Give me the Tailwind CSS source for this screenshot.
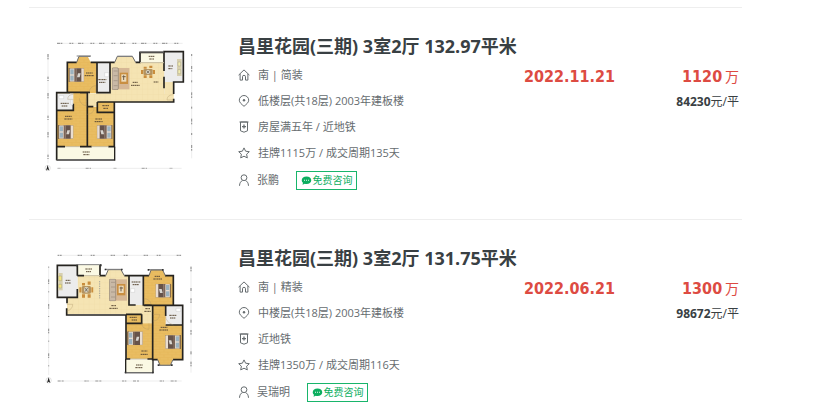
<!DOCTYPE html>
<html lang="zh-CN">
<head>
  <meta charset="UTF-8" />
  <meta name="viewport" content="width=device-width, initial-scale=1" />
  <title>昌里花园(三期) 成交</title>
  <script src="https://cdn.jsdelivr.net/npm/@tailwindcss/browser@4"></script>
</head>
<body class="bg-white text-[#666c6f] font-['Open_Sans','Noto_Sans_CJK_SC',sans-serif]">
  <!-- Shared symbols -->
  <svg class="absolute size-0" aria-hidden="true">
    <defs>
      <symbol id="i-home" viewBox="0 0 12 12"><path d="M.6 6.1 6 .9l5.4 5.2M2.1 5v6.1h2.4V7.8a1.5 1.5 0 0 1 3 0v3.3h2.4V5" fill="none" stroke="currentColor" /></symbol>
      <symbol id="i-pin" viewBox="0 0 12 12"><path d="M6 11.3C3.6 9.3 1.3 7.500 1.300 5.200a4.700 4.700 0 0 1 9.400 0C10.700 7.500 8.400 9.300 6 11.300Z" fill="none" stroke="currentColor" /><circle cx="6" cy="5.200" r="1.200" fill="currentColor" /></symbol>
      <symbol id="i-tag" viewBox="0 0 12 12"><path d="M2.500 1h7v8.800L6 11.200 2.500 9.800Z" fill="none" stroke="currentColor" /><path d="M6 3.600v4M4 5.600h4" stroke="currentColor" stroke-width="1.300" /><path d="M1.500 1h9" stroke="currentColor" /></symbol>
      <symbol id="i-star" viewBox="0 0 12 12"><path d="m6 .9 1.600 3.300 3.700.5-2.700 2.500.7 3.700L6 9.200l-3.300 1.700.7-3.700L.7 4.700l3.700-.5Z" fill="none" stroke="currentColor" stroke-linejoin="round" /></symbol>
      <symbol id="i-user" viewBox="0 0 12 12"><circle cx="6" cy="3.700" r="2.900" fill="none" stroke="currentColor" /><path d="M1.500 11.800c.1-3 1.500-4.700 3-5.200M10.500 11.800c-.1-3-1.500-4.700-3-5.200" fill="none" stroke="currentColor" /></symbol>
      <symbol id="i-chat" viewBox="0 0 12 10"><path d="M6 .5c3.100 0 5.300 1.700 5.300 4.100S9.100 8.800 6 8.800c-.7 0-1.300-.1-1.900-.3L1.600 9.700l.5-2.200C1.200 6.800.7 5.800.7 4.600.7 2.200 2.900.5 6 .5Z" fill="currentColor" /><path d="M3.300 4.300h1v.9h-1zM5.500 4.300h1v.9h-1zM7.700 4.300h1v.9h-1z" fill="#fff" /></symbol>

      <pattern id="wood" width="24" height="16" patternUnits="userSpaceOnUse"><rect width="24" height="16" fill="#e9bd62" /><path d="M0 1h24M0 9h24M6 1v8M18 9v7" stroke="#dfae50" /></pattern>
      <pattern id="tile" width="16" height="16" patternUnits="userSpaceOnUse"><rect width="16" height="16" fill="#f5e4b3" /><path d="M0 0h16M0 0v16" stroke="#ecd6a0" /></pattern>
      <!-- bed with its head on the left -->
      <symbol id="bed" viewBox="0 0 48 42"><rect y="0" width="6" height="42" fill="#8a6d48" /><rect x="4" y="1" width="43" height="40" fill="#e9ddd0" stroke="#8b7a69" /><rect x="6" y="4" width="10" height="15" fill="#9cb2bf" /><rect x="6" y="23" width="10" height="15" fill="#9cb2bf" /><rect x="18" y="1" width="6" height="40" fill="#7b6558" /><rect x="24" y="1" width="15" height="40" fill="#66534a" /><path d="M29 16h8l-3 12h-8z" fill="#d8d5cf" /></symbol>
      <!-- sofa, rug and coffee table -->
      <symbol id="sofa" viewBox="0 0 54 68"><rect x="18" y="2" width="36" height="64" fill="#d6b795" /><rect x="24" y="16" width="25" height="34" fill="#c98f42" /><rect x="29" y="21" width="15" height="22" fill="#eddcbc" /><path d="M32 28h10M36 24v14" stroke="#6f5c48" stroke-width="3" /><rect x="1" y="1" width="19" height="66" rx="4" fill="#c9b9a6" stroke="#8b7d6e" stroke-width="2" /><path d="M6 11h12M6 25h12M6 40h12M6 55h12" stroke="#9c8d7d" stroke-width="2" /></symbol>
      <symbol id="dining" viewBox="0 0 44 42"><rect x="8" y="12" width="28" height="18" rx="4" fill="#b4935e" /><circle cx="22" cy="21" r="7" fill="#d5ceb9" /><path d="M9 5h9v6H9zM26 2h9v7h-9zM9 31h9v8H9zM26 31h9v8h-9z" fill="#c98d3d" /><path d="M1 15h6v12H1zM37 15h6v12h-6z" fill="#c98d3d" /><path d="M18 17l8 8M26 17l-8 8" stroke="#625b50" stroke-width="2" /></symbol>
    </defs>
  </svg>

  <main class="ml-[29px] mt-[7px] max-w-[713px]">
    <ul>
      <!-- Listing 1 -->
      <li class="flex items-start border-t border-[#eeeeee] pt-[22px] pb-[25px]">
        <a href="#" class="ml-px w-[180px] shrink-0" aria-label="户型图">
          <svg viewBox="0 0 540 450" class="w-full">
            <!-- dimension lines -->
            <g fill="none" stroke="#777" stroke-width="3">
              <path d="M81 40H458" stroke-dasharray="9 2 5 21 6 2 4 14" />
              <path d="M83 415H455" stroke-dasharray="3 2 3 76 9 3 4 68" opacity=".8" />
              <path d="M54 72V400" stroke-dasharray="9 2 5 52 7 3 3 36" />
              <path d="M485 72V385" stroke-dasharray="6 30 9 3 5 26" />
              <path d="M81 40H458M83 415H455M54 72V400M485 72V385" stroke="#c9c9c9" stroke-width="1" />
            </g>
            <circle cx="53" cy="414" r="8" fill="#fff" stroke="#aaa" /><path d="m53 405 5 17-5-4-5 4z" fill="#222" />
            <!-- floors -->
            <path d="M112 97h28l6-16h28l8 16h18v92h-88z" fill="url(#wood)" />
            <path d="M80 188h91v162H80zM170 230h82v120h-82zM202 216h50v32h-50z" fill="url(#wood)" />
            <path d="M240 97h14l8-16h47l8 16h113v119H170v-26h70z" fill="url(#tile)" />
            <path d="M170 214h32v16h-32z" fill="url(#tile)" />
            <path d="M201 97h38v91h-38zM81 190h49v50H81zM402 67h58v89h-29v36h-28z" fill="#ececec" />
            <path d="M403 156h28v59h-28z" fill="url(#tile)" />
            <path d="M330 68h72v29h-72zM80 352h172v36H80z" fill="#fbf9e4" />
            <!-- walls -->
            <g fill="none" stroke="#25231f" stroke-width="5">
              <path d="M112 189V97h28M182 97h72M317 97h15M112 187h68M201 97v91h39V97M330 97V67h72v-2h58v91h-29v36M402 67v56M402 140v35M431 206v10H202M80 391V188h40M150 188h22v162M80 241h50v-20M80 350h25M150 350h35M235 350h18V217M202 216v31h50M170 230h20" />
              <path d="M80 390h174V350" stroke-width="4" />
              <path d="M140 97l7-18h34M254 97l8-18h45l10 18" stroke-width="3" stroke="#696969" />
            </g>
            <path d="M140 78h43M262 79h45M330 66h72M80 390h172" stroke="#7d7d7d" stroke-width="3" />
            <path d="M330 98h72M105 350h45M185 350h50" stroke="#c6bda0" stroke-width="3" />
            <g fill="none" stroke="#aa9164" stroke-width="1"><path d="M197 188v-22q-18 4-20 22M148 204q0 18 20 24v-24M130 208h-17q0-14 17-15M431 194q-20 0-20 16h20M172 253q20-1 20-20" /></g>
            <!-- furniture -->
            <use href="#bed" x="115" y="114" width="48" height="42" />
            <use href="#bed" x="83" y="285" width="48" height="42" />
            <use href="#bed" x="200" y="285" width="48" height="42" transform="matrix(-1 0 0 1 448 0)" />
            <use href="#sofa" x="245" y="112" width="54" height="68" />
            <use href="#dining" x="332" y="105" width="44" height="42" />
            <path d="M441 87h14v51h-14z" fill="#d7cfae" /><path d="M444 96h8v12h-8zM444 119h8v12h-8z" fill="#f4edae" stroke="#888" />
            <path d="M224 128h12v12h-12zM87 197h14v9H87zM123 209h5v16h-5z" fill="#fff" stroke="#b9b9b9" />
            <!-- room marks -->
            <g stroke="#5b4a35" stroke-width="3" stroke-dasharray="5 1 4 1"><path d="M168 129h20M164 137h27M308 157h15M303 166h26M371 156h14M356 79h18M358 87h14M415 108h14M415 116h12M205 149h24M207 157h19M92 220h24M95 228h18M217 227h20M220 235h14M105 259h20M103 267h24M196 267h20M194 275h24M158 366h22M160 374h18" /></g>
          </svg>
        </a>
        <div class="ml-7 mt-1 flex-1 min-w-0">
          <h2 class="text-[18px] leading-6 font-bold text-[#394043] whitespace-nowrap"><a href="#">昌里花园(三期) 3室2厅 132.97平米</a></h2>
          <div class="mt-1 flex text-[11px]">
            <div class="w-[286px] shrink-0">
              <p class="flex h-[26px] items-center gap-2"><svg class="size-3"><use href="#i-home" /></svg>南 | 简装</p>
              <p class="flex h-[26px] items-center gap-2"><svg class="size-3"><use href="#i-pin" /></svg>低楼层(共18层) 2003年建板楼</p>
              <p class="flex h-[26px] items-center gap-2"><svg class="size-3"><use href="#i-tag" /></svg>房屋满五年 / 近地铁</p>
              <p class="flex h-[26px] items-center gap-2"><svg class="size-3"><use href="#i-star" /></svg>挂牌1115万 / 成交周期135天</p>
              <div class="flex h-7 items-center gap-[7px]">
                <svg class="size-3"><use href="#i-user" /></svg><a href="#">张鹏</a>
                <button class="ml-[10px] flex h-[19px] w-[61px] items-center justify-center gap-px border border-[#18b56b] text-[10px] leading-none text-[#0cae5f] whitespace-nowrap"><svg class="h-[9px] w-[11px]"><use href="#i-chat" /></svg>免费咨询</button>
              </div>
            </div>
            <div class="flex-1 mt-[3px] font-['DejaVu_Sans_Condensed','DejaVu_Sans',sans-serif] text-[16px] leading-6 font-bold text-[#dd4b42]">2022.11.21</div>
            <div class="mt-[3px] pr-[3px] text-right whitespace-nowrap">
              <div class="leading-6 text-[#dd4b42]"><span class="font-['DejaVu_Sans_Condensed','DejaVu_Sans',sans-serif] text-[16px] font-bold">1120</span> <span class="text-[14px]">万</span></div>
              <div class="text-[12px] leading-6 text-[#394043]"><b>84230</b>元/平</div>
            </div>
          </div>
        </div>
      </li>

      <!-- Listing 2 -->
      <li class="flex items-start border-t border-[#eeeeee] pt-[22px]">
        <a href="#" class="ml-px w-[180px] shrink-0" aria-label="户型图">
          <svg viewBox="0 -9 540 450" class="w-full">
            <!-- dimension lines -->
            <g fill="none" stroke="#777" stroke-width="3">
              <path d="M83 31H455" stroke-dasharray="5 2 5 48 6 2 5 26" />
              <path d="M83 408H455" stroke-dasharray="9 3 6 62 7 2 4 20" opacity=".8" />
              <path d="M56 65V390" stroke-dasharray="3 35 8 2 4 22" />
              <path d="M483 65V383" stroke-dasharray="7 2 5 50 9 22" />
              <path d="M83 31H455M83 408H455M56 65V390M483 65V383" stroke="#c9c9c9" stroke-width="1" />
            </g>
            <circle cx="56" cy="406" r="8" fill="#fff" stroke="#aaa" /><path d="m56 397 5 17-5-4-5 4z" fill="#222" />
            <!-- floors -->
            <path d="M142 92h85l7-18h40l9 18h14v88h70v55h-33v-28H111v-48h31z" fill="url(#tile)" />
            <path d="M341 92h15l7-17h35l8 17h24v88h-89z" fill="url(#wood)" />
            <path d="M369 181h88v162h-28l-8 17h-32l-7-17h-13zM289 208h46v27h33v107h-79z" fill="url(#wood)" />
            <path d="M83 62h60v95H83zM298 92h42v88h-42zM407 181h50v59h-50z" fill="#ececec" />
            <path d="M142 60h71v31h-71zM288 345h80v36h-80z" fill="#fbf9e4" />
            <!-- walls -->
            <g fill="none" stroke="#25231f" stroke-width="5">
              <path d="M142 92V61H82v96h29v18M142 132v25h-31M110 190v20h178v132M142 92h20M210 60v32h17M283 92h74M297 92v88h20M340 92v88h25M405 92h25v89H341M368 181h90v163h-29M383 344h-15V181M335 208v27h-46M288 208h47M407 181v32M407 240h50M288 342h13M352 342h16" />
              <path d="M287 342v41h82v-41" stroke-width="4" />
              <path d="M227 92l8-18h38l10 18M357 92l6-17h35l8 17M383 344l7 17h31l8-17" stroke-width="3" stroke="#696969" />
            </g>
            <path d="M142 59h71M226 73h48M357 74h42M386 361h39M286 383h83" stroke="#7d7d7d" stroke-width="3" />
            <path d="M162 92h48M301 342h51" stroke="#c6bda0" stroke-width="3" />
            <path d="M138 59h6v5h-6zM210 58h5v6h-5zM224 71h5v5h-5zM273 71h5v5h-5zM353 72h5v5h-5zM396 72h5v5h-5zM284 380h5v5h-5zM366 380h5v5h-5zM383 358h5v5h-5zM423 358h5v5h-5z" fill="#333" />
            <path d="M209 108v52" stroke="#a6a59b" stroke-width="3" stroke-dasharray="4 3" />
            <path d="M110 178h18q0 16-18 20M343 179v-18q19 2 20 18M369 208h20q-2 20-20 20M335 235q2 18 22 18v-18M407 212q0 20 23 28" fill="none" stroke="#aa9164" />
            <!-- furniture -->
            <use href="#bed" x="376" y="116" width="48" height="42" transform="matrix(-1 0 0 1 800 0)" />
            <use href="#bed" x="291" y="259" width="48" height="42" />
            <use href="#bed" x="405" y="270" width="48" height="42" transform="matrix(-1 0 0 1 858 0)" />
            <use href="#sofa" x="237" y="101" width="54" height="68" />
            <g transform="matrix(1 0 0 1.3 0 -41)"><use href="#dining" x="147" y="114" width="44" height="42" /></g>
            <path d="M84 84h14v52H84z" fill="#d7cfae" /><path d="M86 93h9v14h-9zM86 118h9v11h-9z" fill="#f4e47a" stroke="#888" />
            <path d="M302 131h12v11h-12zM438 190h14v9h-14z" fill="#fff" stroke="#b9b9b9" />
            <!-- room marks -->
            <g stroke="#5b4a35" stroke-width="3" stroke-dasharray="5 1 4 1"><path d="M166 72h20M168 80h15M107 106h14M105 114h18M244 182h14M238 190h25M305 111h26M308 119h19M374 94h16M370 102h26M346 191h14M343 199h19M299 217h22M305 225h16M418 211h22M420 219h17M392 247h20M388 255h26M334 318h18M332 328h21M318 360h20M316 368h22" /></g>
          </svg>
        </a>
        <div class="ml-7 mt-1 flex-1 min-w-0">
          <h2 class="text-[18px] leading-6 font-bold text-[#394043] whitespace-nowrap"><a href="#">昌里花园(三期) 3室2厅 131.75平米</a></h2>
          <div class="mt-1 flex text-[11px]">
            <div class="w-[286px] shrink-0">
              <p class="flex h-[26px] items-center gap-2"><svg class="size-3"><use href="#i-home" /></svg>南 | 精装</p>
              <p class="flex h-[26px] items-center gap-2"><svg class="size-3"><use href="#i-pin" /></svg>中楼层(共18层) 2003年建板楼</p>
              <p class="flex h-[26px] items-center gap-2"><svg class="size-3"><use href="#i-tag" /></svg>近地铁</p>
              <p class="flex h-[26px] items-center gap-2"><svg class="size-3"><use href="#i-star" /></svg>挂牌1350万 / 成交周期116天</p>
              <div class="flex h-7 items-center gap-[7px]">
                <svg class="size-3"><use href="#i-user" /></svg><a href="#">吴瑞明</a>
                <button class="ml-[10px] flex h-[19px] w-[61px] items-center justify-center gap-px border border-[#18b56b] text-[10px] leading-none text-[#0cae5f] whitespace-nowrap"><svg class="h-[9px] w-[11px]"><use href="#i-chat" /></svg>免费咨询</button>
              </div>
            </div>
            <div class="flex-1 mt-[3px] font-['DejaVu_Sans_Condensed','DejaVu_Sans',sans-serif] text-[16px] leading-6 font-bold text-[#dd4b42]">2022.06.21</div>
            <div class="mt-[3px] pr-[3px] text-right whitespace-nowrap">
              <div class="leading-6 text-[#dd4b42]"><span class="font-['DejaVu_Sans_Condensed','DejaVu_Sans',sans-serif] text-[16px] font-bold">1300</span> <span class="text-[14px]">万</span></div>
              <div class="text-[12px] leading-6 text-[#394043]"><b>98672</b>元/平</div>
            </div>
          </div>
        </div>
      </li>
    </ul>
  </main>
</body>
</html>
